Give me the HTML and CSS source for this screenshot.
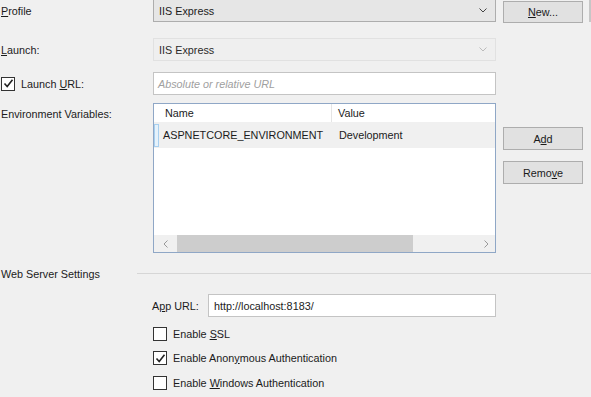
FILE: index.html
```html
<!DOCTYPE html>
<html>
<head>
<meta charset="utf-8">
<link rel="stylesheet" href="styles.css">
</head>
<body>
<div class="page">
  <div class="grid">
    <div class="label r1"><u>P</u>rofile</div>
    <div class="combo r1">
      <span>IIS Express</span>
      <svg class="chev" width="8" height="5" viewBox="0 0 8 5"><polyline points="0.5,0.5 4,4 7.5,0.5" fill="none" stroke="#444" stroke-width="1"/></svg>
    </div>
    <div class="btn r1 newbtn"><u>N</u>ew...</div>

    <div class="label r2"><u>L</u>aunch:</div>
    <div class="combo disabled r2">
      <span>IIS Express</span>
      <svg class="chev" width="8" height="5" viewBox="0 0 8 5"><polyline points="0.5,0.5 4,4 7.5,0.5" fill="none" stroke="#bbb" stroke-width="1"/></svg>
    </div>

    <div class="label r3 checkrow">
      <span class="cb">
        <svg width="11" height="11" viewBox="0 0 11 11"><polyline points="1.5,5.5 4.2,8.5 9.5,1.8" fill="none" stroke="#222" stroke-width="1.6"/></svg>
      </span>
      <span>Launch <u>U</u>RL:</span>
    </div>
    <div class="textbox r3"><span class="placeholder">Absolute or relative URL</span></div>

    <div class="label r4 envlabel">Environment Variables:</div>
    <div class="list r4">
      <div class="lhead">
        <div class="c1">Name</div>
        <div class="c2">Value</div>
      </div>
      <div class="lrow">
        <div class="focus"></div>
        <div class="c1">ASPNETCORE_ENVIRONMENT</div>
        <div class="c2">Development</div>
      </div>
      <div class="lbody"></div>
      <div class="hscroll">
        <div class="arr">
          <svg width="5" height="8" viewBox="0 0 5 8"><polyline points="4.5,0.5 1,4 4.5,7.5" fill="none" stroke="#999" stroke-width="1"/></svg>
        </div>
        <div class="thumb"></div>
        <div class="track"></div>
        <div class="arr">
          <svg width="5" height="8" viewBox="0 0 5 8"><polyline points="0.5,0.5 4,4 0.5,7.5" fill="none" stroke="#999" stroke-width="1"/></svg>
        </div>
      </div>
    </div>
    <div class="btncol r4">
      <div class="btn">A<u>d</u>d</div>
      <div class="btn">Remo<u>v</u>e</div>
    </div>
  </div>

  <div class="section">
    <div class="stitle">Web Server Settings</div>
    <div class="sline"></div>
  </div>

  <div class="server">
    <div class="approw">
      <div class="applabel">A<u>p</u>p URL:</div>
      <div class="textbox appbox">http://localhost:8183/</div>
    </div>
    <div class="check c-ssl">
      <span class="cb"></span>
      <span>Enable <u>S</u>SL</span>
    </div>
    <div class="check c-anon">
      <span class="cb">
        <svg width="11" height="11" viewBox="0 0 11 11"><polyline points="1.5,5.5 4.2,8.5 9.5,1.8" fill="none" stroke="#222" stroke-width="1.6"/></svg>
      </span>
      <span>Enable Anon<u>y</u>mous Authentication</span>
    </div>
    <div class="check c-win">
      <span class="cb"></span>
      <span>Enable <u>W</u>indows Authentication</span>
    </div>
  </div>
  <div class="edge"></div>
</div>
</body>
</html>
```

FILE: styles.css
```css
html, body {
  margin: 0;
  padding: 0;
  background: #f0f0f0;
}
body {
  font-family: "Liberation Sans", Arial, sans-serif;
  font-size: 10.8px;
  color: #1b1b1b;
  width: 591px;
  height: 397px;
  overflow: hidden;
}
.page {
  position: relative;
  padding-left: 1px;
}
u {
  text-decoration: underline;
  text-underline-offset: 1px;
}
.grid {
  display: grid;
  grid-template-columns: 145px 343px 80px;
  grid-template-rows: 23px 39px 34px 158px;
  column-gap: 7px;
  margin-top: -1px;
}
.r1 { grid-row: 1; }
.r2 { grid-row: 2; margin-top: 16px; }
.r3 { grid-row: 3; margin-top: 11px; }
.r4 { grid-row: 4; margin-top: 8px; }
.r1, .r2, .r3 { height: 23px; }
.label {
  display: flex;
  align-items: center;
  white-space: nowrap;
}
.combo {
  box-sizing: border-box;
  border: 1px solid #adadad;
  background: #e6e6e6;
  display: flex;
  align-items: center;
  justify-content: space-between;
  padding: 0 8px 0 5px;
}
.combo.disabled {
  background: #efefef;
  border-color: #e1e1e1;
  color: #2a2a2a;
}
.chev { display: block; }
.btn {
  box-sizing: border-box;
  height: 23px;
  border: 1px solid #adadad;
  background: #e1e1e1;
  display: flex;
  align-items: center;
  justify-content: center;
}
.newbtn {
  margin-top: 2px;
  height: 22px;
}
.checkrow {
  gap: 6px;
}
.cb {
  box-sizing: border-box;
  width: 14px;
  height: 14px;
  border: 1px solid #333;
  background: #fff;
  display: flex;
  align-items: center;
  justify-content: center;
  flex: none;
}
.textbox {
  box-sizing: border-box;
  border: 1px solid #c4c4c4;
  background: #fff;
  display: flex;
  align-items: center;
  padding: 0 4px;
}
.placeholder {
  font-style: italic;
  color: #a0a0a0;
}
.envlabel {
  align-items: flex-start;
  padding-top: 5px;
  height: auto;
}
.list {
  box-sizing: border-box;
  height: 150px;
  border: 1px solid #8fa7c6;
  background: #fff;
  display: flex;
  flex-direction: column;
}
.lhead {
  display: flex;
  height: 18px;
  flex: none;
}
.lhead .c1, .lhead .c2 {
  display: flex;
  align-items: center;
}
.c1 {
  width: 178px;
  box-sizing: border-box;
  padding-left: 11px;
  flex: none;
}
.lhead .c1 {
  border-right: 1px solid #e5e5e5;
}
.c2 {
  padding-left: 6px;
}
.lrow {
  position: relative;
  display: flex;
  align-items: center;
  height: 26px;
  background: #f0f0f0;
  flex: none;
}
.lrow .c1 {
  padding-left: 9px;
}
.lrow .c2 {
  padding-left: 7px;
}
.focus {
  position: absolute;
  left: 0;
  top: 2px;
  width: 3px;
  height: 21px;
  border: 1px solid #a8d0f0;
  background: #e6f2fb;
}
.lbody {
  flex: 1;
}
.hscroll {
  display: flex;
  height: 17px;
  flex: none;
  background: #f0f0f0;
}
.arr {
  width: 23px;
  display: flex;
  align-items: center;
  justify-content: center;
  flex: none;
}
.hscroll .arr:last-child {
  width: 17px;
}
.thumb {
  width: 236px;
  background: #cdcdcd;
  flex: none;
}
.track {
  flex: 1;
}
.btncol {
  display: flex;
  flex-direction: column;
  gap: 11px;
  padding-top: 24px;
}
.section {
  display: flex;
  align-items: center;
  margin-top: 14px;
  height: 14px;
}
.stitle {
  width: 136px;
  flex: none;
}
.sline {
  flex: 1;
  height: 1px;
  border-top: 1px solid #d6d6d6;
}
.server {
  padding-left: 151px;
  padding-top: 13px;
}
.approw {
  display: flex;
  align-items: center;
  height: 23px;
}
.applabel {
  width: 56px;
  flex: none;
}
.appbox {
  width: 288px;
  height: 23px;
  padding-left: 5px;
}
.check {
  display: flex;
  align-items: center;
  gap: 6px;
  height: 14px;
  padding-left: 1px;
}
.c-ssl { margin-top: 10px; }
.c-anon { margin-top: 10px; }
.c-win { margin-top: 11px; }
.edge {
  position: absolute;
  right: 0;
  top: 1px;
  width: 2px;
  height: 22px;
  background: #c6c6c6;
}
```
